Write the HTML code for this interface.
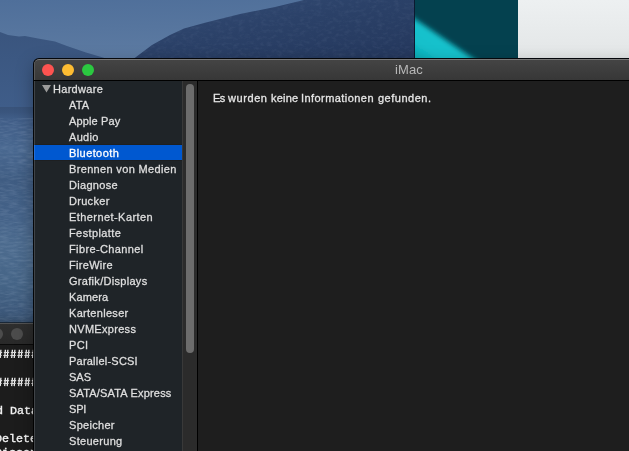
<!DOCTYPE html>
<html><head><meta charset="utf-8">
<style>
html,body{margin:0;padding:0;}
body{width:629px;height:451px;overflow:hidden;position:relative;background:#3f5e8d;font-family:"Liberation Sans",sans-serif;}
#bg{position:absolute;left:0;top:0;width:629px;height:451px;}
#teal{position:absolute;left:414px;top:0;width:104px;height:58px;background:#04414f;overflow:hidden;border-left:1px solid #0c1a30;box-sizing:border-box;}
#grey{position:absolute;left:518px;top:0;width:111px;height:58px;background:linear-gradient(#edf0f1,#e3e6e7);}
/* terminal window */
#term{position:absolute;left:-20px;top:323px;width:60px;height:140px;background:#1c1c1c;box-shadow:0 0 0 1px rgba(0,0,0,.45),0 2px 8px rgba(0,0,0,.35);}
#term .tb{position:absolute;left:0;top:0;width:100%;height:21px;background:linear-gradient(#2e2e2e,#292929);border-top:1px solid #525252;box-sizing:border-box;}
#term .tbl{position:absolute;left:0;top:21px;width:100%;height:1px;background:#0a0a0a;}
#term .c{position:absolute;top:5px;width:12px;height:12px;border-radius:50%;background:#4c4c4c;}
#term pre{will-change:transform;position:absolute;margin:0;left:15.2px;top:0;font-family:"Liberation Mono",monospace;font-size:11.7px;line-height:14px;color:#f4f4f4;-webkit-text-stroke:0.35px currentColor;}
/* main window */
#win{position:absolute;left:34px;top:59px;width:752px;height:420px;background:#1e1e1e;border-radius:5px 0 0 0;overflow:hidden;box-shadow:0 0 0 1px rgba(0,0,0,.92),0 6px 18px rgba(0,0,0,.35);}
#tb{position:absolute;left:0;top:0;width:100%;height:21px;background:linear-gradient(#444444,#373737);border-top:1px solid #787878;box-sizing:border-box;border-radius:5px 0 0 0;}
#tbl{position:absolute;left:0;top:21px;width:100%;height:1px;background:#000;}
.tl{position:absolute;top:5px;width:12px;height:12px;border-radius:50%;}
#title{will-change:transform;position:absolute;left:-1px;width:100%;top:3px;text-align:center;font-size:13px;color:#b7b7b7;line-height:15px;letter-spacing:0.15px;}
#side{position:absolute;left:0;top:22px;width:148px;height:400px;background:#1f2428;}
#track{position:absolute;left:148px;top:22px;width:15px;height:400px;background:#2b2b2b;border-left:1px solid #393939;box-sizing:border-box;}
#thumb{position:absolute;left:152px;top:25px;width:8px;height:269px;border-radius:4px;background:#6c6c6c;}
#div{position:absolute;left:163px;top:22px;width:1px;height:400px;background:#000;}
.row{position:absolute;left:0;width:148px;height:16px;line-height:16px;font-size:11px;color:#dfdfdf;white-space:nowrap;letter-spacing:0.3px;}
.row span{-webkit-text-stroke:0.3px currentColor;will-change:transform;position:absolute;left:34.6px;top:0;}
.row.h span{left:19px;}
.row.sel{background:#0058d0;color:#fff;height:15px;box-shadow:0 1px 0 #1d1f21,0 -1px 0 #1d1f21;}
#msg{-webkit-text-stroke:0.3px currentColor;will-change:transform;position:absolute;left:179px;top:32px;font-size:11px;line-height:14px;color:#e6e6e6;letter-spacing:0.37px;white-space:nowrap;}
</style></head><body>
<svg id="bg" width="629" height="451" viewBox="0 0 629 451">
<defs>
<linearGradient id="sky" x1="0" y1="0" x2="0.25" y2="1"><stop offset="0.0000" stop-color="#4f6f9a"/><stop offset="1.0000" stop-color="#5d7ba2"/></linearGradient>
<linearGradient id="lm" x1="0" y1="0" x2="0" y2="1"><stop offset="0.0000" stop-color="#3a557e"/><stop offset="1.0000" stop-color="#3f5d89"/></linearGradient>
<linearGradient id="rm" x1="0" y1="0" x2="1" y2="1"><stop offset="0.0000" stop-color="#344d76"/><stop offset="0.4500" stop-color="#2b4168"/><stop offset="1.0000" stop-color="#24375c"/></linearGradient>
<linearGradient id="water" x1="0" y1="0" x2="0" y2="1"><stop offset="0.0000" stop-color="#39537a"/><stop offset="0.0231" stop-color="#3a557d"/><stop offset="0.0509" stop-color="#405d87"/><stop offset="0.1991" stop-color="#496890"/><stop offset="0.3380" stop-color="#3f5c82"/><stop offset="0.5000" stop-color="#446288"/><stop offset="0.6389" stop-color="#4c6b8e"/><stop offset="0.8241" stop-color="#456486"/><stop offset="0.9398" stop-color="#3d597b"/><stop offset="1.0000" stop-color="#37506e"/></linearGradient>
<filter id="rip" x="0" y="0" width="100%" height="100%"><feTurbulence type="fractalNoise" baseFrequency="0.11 0.5" numOctaves="2" seed="4" result="n"/><feColorMatrix in="n" type="matrix" values="0 0 0 0 0.75  0 0 0 0 0.85  0 0 0 0 1  1.6 0 0 0 -0.62"/></filter>
<filter id="grain" x="0" y="0" width="100%" height="100%"><feTurbulence type="fractalNoise" baseFrequency="0.18 0.3" numOctaves="3" seed="9" result="n"/><feColorMatrix in="n" type="matrix" values="0 0 0 0 0.7  0 0 0 0 0.8  0 0 0 0 1  1.4 0 0 0 -0.6"/></filter>
</defs>
<rect x="0" y="0" width="629" height="451" fill="#3a5684"/>
<rect x="0" y="0" width="420" height="60" fill="url(#sky)"/>
<path d="M0 32 L8 35 L19 36.5 L25 36 L38 38.5 L55 41.5 L67 46 L86 52.5 L103 57.5 L112 61 L112 107 L0 107 Z" fill="url(#lm)"/>
<path d="M131 60 L135 57.7 L152 45 L170 35 L184 28.5 L205 22.7 L240 14 L275 7 L304 0 L420 0 L420 60 Z" fill="url(#rm)"/>

<rect x="0" y="107" width="40" height="216" fill="url(#water)"/>
<rect x="0" y="118" width="34" height="204" filter="url(#rip)" opacity="0.16"/>
<clipPath id="rmc"><path d="M131 60 L135 57.7 L152 45 L170 35 L184 28.5 L205 22.7 L240 14 L275 7 L304 0 L420 0 L420 60 Z"/></clipPath><g clip-path="url(#rmc)"><rect x="130" y="0" width="290" height="60" filter="url(#grain)" opacity="0.09"/></g>
</svg>
<div id="teal"><svg width="104" height="58" viewBox="0 0 104 58"><defs><filter id="bl" x="-20%" y="-20%" width="140%" height="140%"><feGaussianBlur stdDeviation="2.4"/></filter><linearGradient id="cy" x1="0" y1="1" x2="1" y2="0"><stop offset="0.05" stop-color="#0e9aa4"/><stop offset="0.3" stop-color="#12c0cb"/><stop offset="0.5" stop-color="#12c2cd"/></linearGradient></defs><path d="M-8 13.5 L72 68 L-8 68 Z" fill="url(#cy)" filter="url(#bl)"/></svg></div>
<div id="grey"></div>

<div id="term">
<div class="tb"></div><div class="tbl"></div>
<div class="c" style="left:11px"></div><div class="c" style="left:31px"></div>
<svg style="position:absolute;left:0;top:0" width="60" height="140" viewBox="0 0 60 140"><g stroke="#f4f4f4" fill="none"><path stroke-width="1.25" d="M18.40 26.75 L17.70 35.05 M20.90 26.75 L20.20 35.05 M25.40 26.75 L24.70 35.05 M27.90 26.75 L27.20 35.05 M32.40 26.75 L31.70 35.05 M34.90 26.75 L34.20 35.05 M39.40 26.75 L38.70 35.05 M41.90 26.75 L41.20 35.05 M46.40 26.75 L45.70 35.05 M48.90 26.75 L48.20 35.05 M53.40 26.75 L52.70 35.05 M55.90 26.75 L55.20 35.05"/><path stroke-width="1.05" stroke="#dcdcdc" d="M16.85 29.55 H22.15 M16.35 32.45 H21.65 M23.85 29.55 H29.15 M23.35 32.45 H28.65 M30.85 29.55 H36.15 M30.35 32.45 H35.65 M37.85 29.55 H43.15 M37.35 32.45 H42.65 M44.85 29.55 H50.15 M44.35 32.45 H49.65 M51.85 29.55 H57.15 M51.35 32.45 H56.65"/><path stroke-width="1.25" d="M18.40 54.80 L17.70 63.10 M20.90 54.80 L20.20 63.10 M25.40 54.80 L24.70 63.10 M27.90 54.80 L27.20 63.10 M32.40 54.80 L31.70 63.10 M34.90 54.80 L34.20 63.10 M39.40 54.80 L38.70 63.10 M41.90 54.80 L41.20 63.10 M46.40 54.80 L45.70 63.10 M48.90 54.80 L48.20 63.10 M53.40 54.80 L52.70 63.10 M55.90 54.80 L55.20 63.10"/><path stroke-width="1.05" stroke="#dcdcdc" d="M16.85 57.60 H22.15 M16.35 60.50 H21.65 M23.85 57.60 H29.15 M23.35 60.50 H28.65 M30.85 57.60 H36.15 M30.35 60.50 H35.65 M37.85 57.60 H43.15 M37.35 60.50 H42.65 M44.85 57.60 H50.15 M44.35 60.50 H49.65 M51.85 57.60 H57.15 M51.35 60.50 H56.65"/></g></svg><pre style="top:81px;left:15.75px">d Data</pre><pre style="top:109px;left:15px">Delete
Disconn</pre>
</div>

<div id="win">
<div id="tb"></div><div id="tbl"></div>
<div class="tl" style="left:8px;background:#fd5350"></div>
<div class="tl" style="left:28px;background:#fdbc32"></div>
<div class="tl" style="left:48px;background:#2bc840"></div>
<div id="title">iMac</div>
<div id="side">
<div class="row h" style="top:0"><svg style="position:absolute;left:8px;top:4px" width="9" height="8" viewBox="0 0 9 8"><path d="M0 0 L9 0 L4.5 7.5 Z" fill="#9b9b9b"/></svg><span>Hardware</span></div>
<div class="row" style="top:16px"><span style="letter-spacing:0.15px">ATA</span></div>
<div class="row" style="top:32px"><span style="letter-spacing:0.13px">Apple Pay</span></div>
<div class="row" style="top:48px"><span>Audio</span></div>
<div class="row sel" style="top:64px"><span style="letter-spacing:0.41px">Bluetooth</span></div>
<div class="row" style="top:80px"><span style="letter-spacing:0.34px">Brennen von Medien</span></div>
<div class="row" style="top:96px"><span>Diagnose</span></div>
<div class="row" style="top:112px"><span>Drucker</span></div>
<div class="row" style="top:128px"><span style="letter-spacing:0.43px">Ethernet-Karten</span></div>
<div class="row" style="top:144px"><span style="letter-spacing:0.4px">Festplatte</span></div>
<div class="row" style="top:160px"><span style="letter-spacing:0.38px">Fibre-Channel</span></div>
<div class="row" style="top:176px"><span>FireWire</span></div>
<div class="row" style="top:192px"><span>Grafik/Displays</span></div>
<div class="row" style="top:208px"><span style="letter-spacing:0.13px">Kamera</span></div>
<div class="row" style="top:224px"><span>Kartenleser</span></div>
<div class="row" style="top:240px"><span>NVMExpress</span></div>
<div class="row" style="top:256px"><span>PCI</span></div>
<div class="row" style="top:272px"><span style="letter-spacing:0.22px">Parallel-SCSI</span></div>
<div class="row" style="top:288px"><span style="letter-spacing:0px">SAS</span></div>
<div class="row" style="top:304px"><span style="letter-spacing:0.18px">SATA/SATA Express</span></div>
<div class="row" style="top:320px"><span style="letter-spacing:-0.2px">SPI</span></div>
<div class="row" style="top:336px"><span>Speicher</span></div>
<div class="row" style="top:352px"><span>Steuerung</span></div>
</div>
<div id="track"></div><div id="thumb"></div><div id="div"></div>
<div style="position:absolute;left:0;top:3px;width:1px;height:18px;background:#585858"></div><div style="position:absolute;left:0;top:22px;width:1px;height:400px;background:rgba(255,255,255,0.15)"></div>
<div id="msg"><span style="position:absolute;left:0px;top:0;letter-spacing:-0.5px">Es</span><span style="position:absolute;left:15px;top:0;letter-spacing:0.58px">wurden</span><span style="position:absolute;left:58px;top:0;letter-spacing:0.2px">keine</span><span style="position:absolute;left:88px;top:0;letter-spacing:0.44px">Informationen</span><span style="position:absolute;left:165px;top:0;letter-spacing:0.5px">gefunden.</span></div>
</div>
</body></html>
